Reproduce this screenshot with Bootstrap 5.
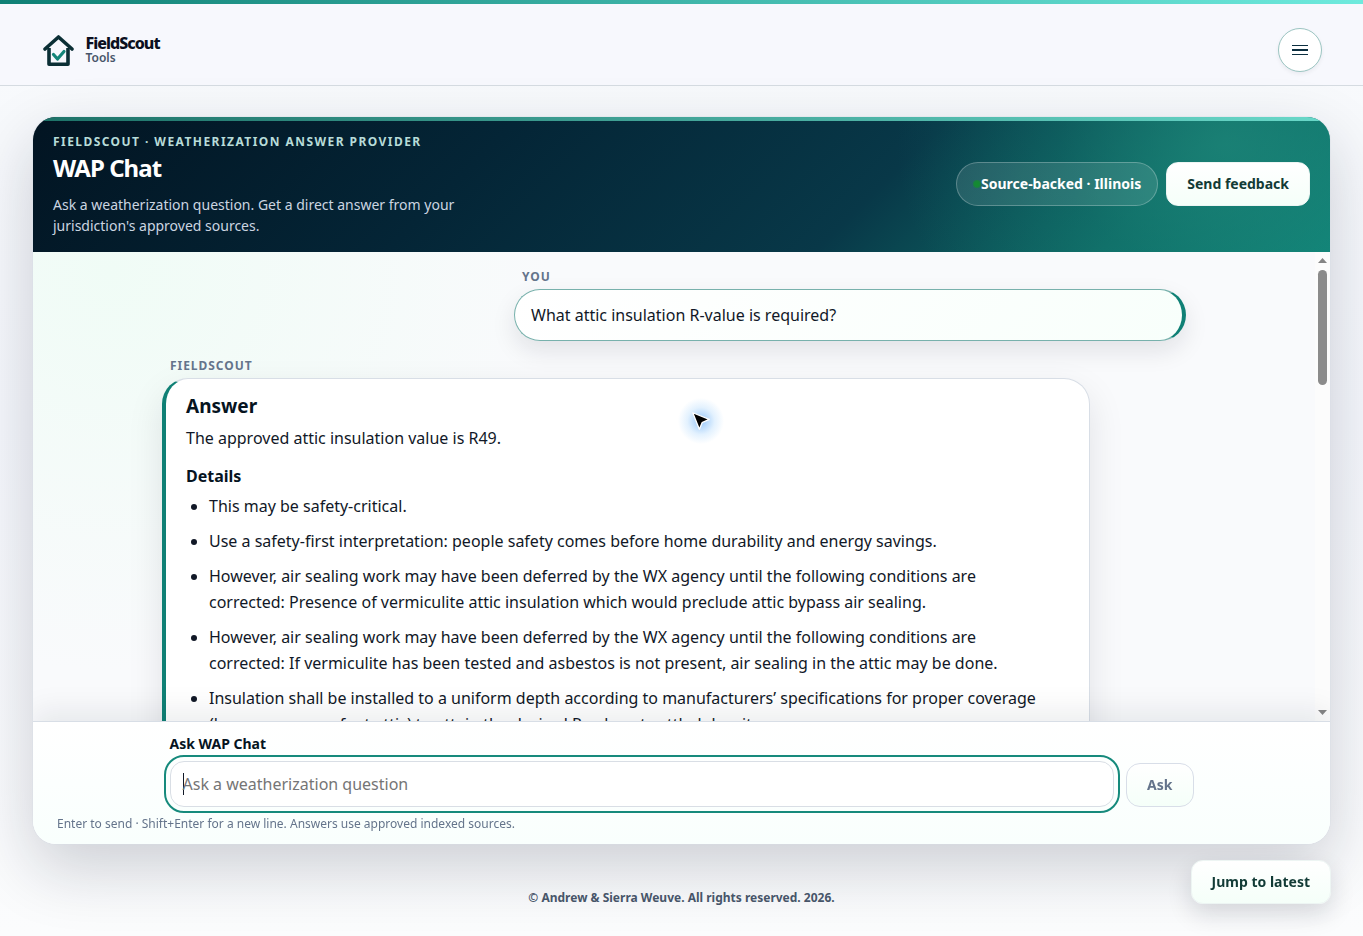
<!DOCTYPE html>
<html lang="en">
<head>
<meta charset="utf-8">
<meta name="viewport" content="width=device-width, initial-scale=1">
<title>WAP Chat · FieldScout Tools</title>
<link href="https://cdn.jsdelivr.net/npm/bootstrap@5.3.0/dist/css/bootstrap.min.css" rel="stylesheet">
<style>
  :root { --ink: #06141f; --teal: #0f8075; --deep: #0b2f35; --slate: #64748b; --line: #d8dee6; }
  body { font-family: "Noto Sans", sans-serif; color: #111827; background: linear-gradient(#f8fafc, #f5f7fc 45%, #fbfcfd); }
  .app-page { min-height: 100vh; }
  .top-stripe { height: 4px; background: linear-gradient(90deg, #0f8075, #6eeadd); }
  .site-header { background: #f7f8fd; border-bottom: 1px solid #d5dbe1; padding: 24px 0 13px; }
  .header-inner { max-width: 1280px; }
  .brand-link { color: #0f172a; gap: 12px; }
  .brand-name { font-size: 16px; line-height: 16px; font-weight: 800; letter-spacing: -.06em; color: #0b1020; }
  .brand-sub { font-size: 12px; line-height: 14px; font-weight: 600; color: #475569; }
  .menu-btn { width: 44px; height: 44px; border: 1px solid #9cc5c2; background: #fff; box-shadow: 0 2px 4px rgba(15,23,42,.06); }
  .app-main { padding: 30px 32px 0; }
  .chat-shell { border: 1px solid rgba(216,222,230,.35); border-radius: 24px; box-shadow: 0 24px 64px rgba(15,23,42,.19); background: #fff; background-clip: padding-box; }
  .chat-clip { border-radius: 23px; overflow: hidden; }
  .chat-top { padding: 14px 20px 16px; color: #fff; position: relative;
    background: radial-gradient(ellipse 330px 260px at 92% 20%, rgba(30,136,122,.7), rgba(22,128,116,.3) 50%, rgba(20,128,117,0)), linear-gradient(135deg, #021422 0%, #042536 34%, #083848 64%, #0f6b66 84%, #12877a 100%); }
  .chat-top::before { content: ""; position: absolute; inset: 0 0 auto; height: 4px; background: linear-gradient(90deg, #1d7268, #69d8c9); }
  .eyebrow { font-size: 12px; line-height: 22px; font-weight: 700; letter-spacing: .12em; color: #b7dcd9; }
  .chat-title { font-size: 24px; line-height: 30px; font-weight: 700; letter-spacing: -.04em; margin-bottom: 11px; }
  .chat-intro { font-size: 14px; line-height: 21px; max-width: 448px; color: #cbd5e1; }
  .source-pill { height: 44px; padding: 0 16px; border: 1px solid rgba(255,255,255,.25); background: rgba(255,255,255,.11); font-size: 14px; font-weight: 700; }
  .status-dot { width: 8px; height: 8px; background: radial-gradient(#148a32 35%, rgba(20,138,50,.35)); border-radius: 4px; }
  .soft-btn { --bs-btn-font-size: 14px; --bs-btn-font-weight: 700; --bs-btn-line-height: 20px; --bs-btn-padding-x: 20px; --bs-btn-padding-y: 11px; --bs-btn-border-radius: 12px; --bs-btn-color: #123b36; --bs-btn-border-color: #edf5f3; background: linear-gradient(#fff, #f5fff9); }
  .chat-body { height: 469px; background: radial-gradient(ellipse 440px 400px at 6% 4%, #f0fcf6, rgba(248,250,252,0)), #f9fafc; position: relative; }
  .msg-view { padding: 16px 129px 0; overflow: hidden; }
  .msg-stack { max-width: 1024px; }
  .msg-role { font-size: 12px; line-height: 18px; font-weight: 700; letter-spacing: .08em; color: var(--slate); padding-left: 8px; margin-bottom: 3px; }
  .user-msg { width: 672px; max-width: 100%; }
  .user-bubble { border: 1px solid #78b1ac; border-right: 4px solid var(--teal); border-radius: 26px; padding: 12px 16px; line-height: 26px; background: linear-gradient(135deg, #fff, #f8fffb); box-shadow: 0 10px 24px rgba(15,23,42,.1); }
  .bot-msg { width: 928px; max-width: 100%; margin-top: 16px; }
  .answer-box { border: 1px solid var(--line); border-left: 4px solid var(--teal); border-radius: 26px; padding: 14px 40px 14px 20px; line-height: 26px; background: #fff; box-shadow: 0 14px 36px rgba(15,23,42,.1); }
  .answer-box h2 { font-size: 19px; line-height: 26px; font-weight: 700; margin-bottom: 6px; color: var(--ink); }
  .answer-box h3 { font-size: 16px; line-height: 24px; font-weight: 700; margin: 13px 0 5px; color: var(--ink); }
  .answer-box ul { padding-left: 23px; }
  .answer-box li { line-height: 26px; margin-bottom: 9px; }
  .scroll-track { width: 15px; background: #fcfcfc; padding: 6px 0; }
  .scroll-thumb { width: 9px; height: 115px; border-radius: 5px; background: #8b8b8b; margin-top: 7px; }
  .composer { border-top: 1px solid var(--line); padding: 11px 24px; background: linear-gradient(#fff, #f9fffd); position: relative; box-shadow: 0 -10px 28px rgba(15,23,42,.08); }
  .ask-form { max-width: 1024px; }
  .ask-row { gap: 12px; }
  .ask-label { font-size: 14px; line-height: 21px; font-weight: 700; color: var(--ink); margin-bottom: 7px; }
  .ask-input, .ask-input:focus { height: 46px; resize: none; overflow: hidden; border-radius: 14px; border: 1px solid #d9dee5; padding: 10px 12px; line-height: 24px; color: #111827; caret-color: transparent; box-shadow: none; outline: 2px solid #168a7c; outline-offset: 4px; background: linear-gradient(#111827, #111827) 12px 11px / 1px 22px no-repeat #fff; }
  .ask-input::placeholder { color: #757575; }
  .ask-btn { --bs-btn-disabled-color: #64748b; --bs-btn-disabled-border-color: #d8dee8; --bs-btn-disabled-opacity: 1; --bs-btn-disabled-bg: #f8fafc; --bs-btn-border-radius: 14px; }
  .hint { font-size: 12px; line-height: 18px; color: var(--slate); margin-top: 8px; }
  .page-foot { font-size: 12px; line-height: 18px; font-weight: 700; color: #475569; padding: 44px 0 28px; }
  .jump-btn { position: fixed; right: 32px; bottom: 32px; box-shadow: 0 10px 24px rgba(15,23,42,.14); }
  .pointer-mark { position: absolute; left: 644px; top: 145px; width: 48px; height: 48px; background: radial-gradient(circle, rgba(80,160,245,.6), rgba(100,180,250,.18) 40%, rgba(120,190,255,0) 68%); }
</style>
</head>
<body>
<div class="app-page">
  <div class="top-stripe"></div>
  <header class="site-header">
    <div class="header-inner mx-auto d-flex align-items-center justify-content-between">
      <a href="#" class="brand-link d-flex align-items-center text-decoration-none">
        <svg width="32" height="32" viewBox="0 0 32 32" fill="none" aria-hidden="true">
          <path d="M3 15 16.500 3 30 15" stroke="#0b2f35" stroke-width="3.600" stroke-linecap="round" stroke-linejoin="round"/>
          <path d="M7 14v16.200h19V14" stroke="#0b2f35" stroke-width="3.600" stroke-linejoin="round"/>
          <path d="m11.500 20.500 4 4.500 6.500-7.500" stroke="#138579" stroke-width="3.200" stroke-linecap="round" stroke-linejoin="round"/>
        </svg>
        <span class="d-flex flex-column">
          <span class="brand-name">FieldScout</span>
          <span class="brand-sub">Tools</span>
        </span>
      </a>
      <button type="button" class="menu-btn rounded-circle p-0 d-flex align-items-center justify-content-center" aria-label="Open menu">
        <svg width="16" height="12" viewBox="0 0 16 12" fill="#0b2f40" aria-hidden="true"><path d="M0 1h16v1H0zM0 5h16v2H0zM0 10h16v1H0z"/></svg>
      </button>
    </div>
  </header>

  <main class="app-main">
    <section class="chat-shell">
      <div class="chat-clip">
        <div class="chat-top d-flex align-items-center justify-content-between">
          <div>
            <div class="eyebrow text-uppercase">FieldScout · Weatherization Answer Provider</div>
            <h1 class="chat-title">WAP Chat</h1>
            <p class="chat-intro mb-0">Ask a weatherization question. Get a direct answer from your jurisdiction's approved sources.</p>
          </div>
          <div class="d-flex align-items-center gap-2">
            <span class="source-pill rounded-pill d-flex align-items-center"><span class="status-dot"></span>Source-backed · Illinois</span>
            <button type="button" class="btn soft-btn">Send feedback</button>
          </div>
        </div>

        <div class="chat-body d-flex">
          <div class="msg-view flex-grow-1">
            <div class="msg-stack mx-auto">
              <article class="user-msg ms-auto">
                <div class="msg-role text-uppercase">You</div>
                <div class="user-bubble">What attic insulation R-value is required?</div>
              </article>
              <article class="bot-msg">
                <div class="msg-role text-uppercase">FieldScout</div>
                <div class="answer-box">
                  <h2>Answer</h2>
                  <p class="mb-0">The approved attic insulation value is R49.</p>
                  <h3>Details</h3>
                  <ul>
                    <li>This may be safety-critical.</li>
                    <li>Use a safety-first interpretation: people safety comes before home durability and energy savings.</li>
                    <li>However, air sealing work may have been deferred by the WX agency until the following conditions are corrected: Presence of vermiculite attic insulation which would preclude attic bypass air sealing.</li>
                    <li>However, air sealing work may have been deferred by the WX agency until the following conditions are corrected: If vermiculite has been tested and asbestos is not present, air sealing in the attic may be done.</li>
                    <li>Insulation shall be installed to a uniform depth according to manufacturers’ specifications for proper coverage (bags per square foot attic) to attain the desired R-value at settled density.</li>
                  </ul>
                </div>
              </article>
            </div>
          </div>
          <div class="scroll-track d-flex flex-column align-items-center flex-shrink-0" aria-hidden="true">
            <svg width="9" height="5" viewBox="0 0 9 5" fill="#858585"><path d="M0 5 4.500 0 9 5z"/></svg>
            <div class="scroll-thumb"></div>
            <svg class="mt-auto" width="9" height="5" viewBox="0 0 9 5" fill="#858585"><path d="M0 0h9L4.500 5z"/></svg>
          </div>
          <div class="pointer-mark d-flex align-items-center justify-content-center" aria-hidden="true">
            <svg width="22" height="22" viewBox="0 0 20 20"><path d="M2.500 2.500 17.500 8.500 11 11.500 8.500 17.500z" fill="#000" stroke="#fff" stroke-width="1.200" stroke-linejoin="round"/></svg>
          </div>
        </div>

        <div class="composer">
          <form class="ask-form mx-auto">
            <label for="question" class="ask-label d-block">Ask WAP Chat</label>
            <div class="ask-row d-flex align-items-end">
              <textarea id="question" class="form-control ask-input flex-grow-1" rows="1" placeholder="Ask a weatherization question" autofocus></textarea>
              <button type="submit" class="btn soft-btn ask-btn" disabled>Ask</button>
            </div>
          </form>
          <p class="hint mb-0">Enter to send · Shift+Enter for a new line. Answers use approved indexed sources.</p>
        </div>
      </div>
    </section>
  </main>
  <footer class="page-foot text-center">© Andrew &amp; Sierra Weuve. All rights reserved. 2026.</footer>
</div>
<button type="button" class="btn soft-btn jump-btn">Jump to latest</button>
<script src="https://cdn.jsdelivr.net/npm/bootstrap@5.3.0/dist/js/bootstrap.bundle.min.js"></script>
</body>
</html>
